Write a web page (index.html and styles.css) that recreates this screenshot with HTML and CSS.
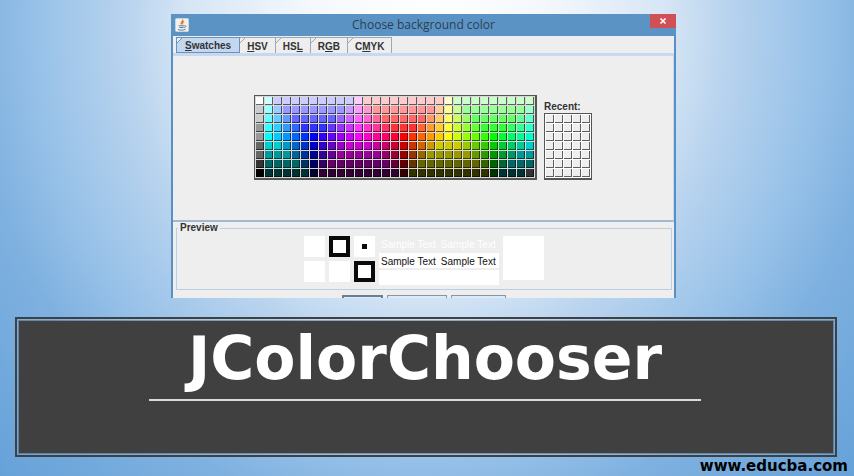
FILE: index.html
```html
<!DOCTYPE html>
<html lang="en">

<head>
  <meta charset="UTF-8">
  <meta name="viewport" content="width=device-width, initial-scale=1.0">
  <title>JColorChooser</title>
  <link rel="stylesheet" href="styles.css">
</head>

<body>
  <main class="slide">
    <section class="dialog">
      <header class="titlebar">
        <svg class="titlebar__icon" viewBox="0 0 14 14">
          <rect x="0.5" y="0.5" width="13" height="13" rx="1" fill="#f3f1ee" stroke="#c9d3dc" />
          <path d="M7.6 1.500c1 1.700-2.600 2.400-1.200 5M9 3.400c-1.600.8-2 1.600-1 3" fill="none" stroke="#e0813a" stroke-width="1.300" />
          <path d="M3.600 7.800h5.600M4.400 9.500h4.200M9.500 7.600c2-.4 1.800 1.600-.3 2M3 11.500c2 .9 5.600.9 7.600-.3" fill="none" stroke="#5b7d9c" />
        </svg>
        <h2 class="titlebar__text">Choose background color</h2>
        <button class="titlebar__close" type="button" aria-label="Close">
          <svg viewBox="0 0 8 8" width="8" height="8">
            <path d="M1.500 1.500l5 5M6.500 1.500l-5 5" stroke="#fff" stroke-width="1.600" />
          </svg>
        </button>
      </header>

      <nav class="tabs" role="tablist">
        <button class="tab tab--active" type="button" role="tab" aria-selected="true"><u>S</u>watches</button>
        <button class="tab" type="button" role="tab"><u>H</u>SV</button>
        <button class="tab" type="button" role="tab">HS<u>L</u></button>
        <button class="tab" type="button" role="tab">R<u>G</u>B</button>
        <button class="tab" type="button" role="tab">C<u>M</u>YK</button>
      </nav>

      <div class="panel">
        <div class="swatches" id="swatches"></div>
        <div class="recent">
          <span class="recent__label">Recent:</span>
          <div class="swatches swatches--recent" id="recent"></div>
        </div>
      </div>

      <fieldset class="preview">
        <legend class="preview__legend">Preview</legend>
        <div class="preview__body">
          <div class="squares">
            <span class="square"></span>
            <span class="square square--frame"></span>
            <span class="square square--dot"></span>
            <span class="square"></span>
            <span class="square"></span>
            <span class="square square--frame"></span>
          </div>
          <div class="samples">
            <div class="sample sample--light"><span>Sample Text</span><span>Sample Text</span></div>
            <div class="sample sample--filled"><span>Sample Text</span><span>Sample Text</span></div>
            <div class="sample sample--filled"></div>
          </div>
          <div class="preview__color"></div>
        </div>
      </fieldset>

      <div class="actions">
        <button class="action action--ok" type="button" aria-label="OK"></button>
        <button class="action action--cancel" type="button" aria-label="Cancel"></button>
        <button class="action action--reset" type="button" aria-label="Reset"></button>
      </div>
    </section>

    <section class="banner">
      <div class="banner__inner">
        <h1 class="banner__title">JColorChooser</h1>
        <hr class="banner__rule">
      </div>
    </section>

    <footer class="site">www.educba.com</footer>
  </main>

  <script src="script.js"></script>
</body>

</html>
```

FILE: styles.css
```css
* {
  box-sizing: border-box;
}

body {
  margin: 0;
  font-family: "Liberation Sans", Arial, sans-serif;
  font-size: 10px;
  line-height: 12px;
  color: #333;
}

button {
  margin: 0;
  padding: 0;
  border: 0;
  font: inherit;
  color: inherit;
}

.slide {
  min-height: 100vh;
  background: radial-gradient(ellipse 56% 110% at 50% 6%, #fff 0%, #f4f8fd 25%, #d6e6f5 50%, #b8d3ee 63%, #9ac3e9 80%, #7fb1e0 95%, #5b9bd5 135%);
  padding-top: 14px;
}

/* Dialog window */

.dialog {
  margin: 0 178px 19px 171px;
  border: solid #5a8fc4;
  border-width: 0 2px;
  background-color: #eee;
}

.titlebar {
  display: flex;
  align-items: center;
  height: 22px;
  margin: 0 -2px;
  padding-left: 4px;
  background-color: #5b93c5;
}

.titlebar__icon {
  width: 14px;
  height: 14px;
}

.titlebar__text {
  flex: 1;
  margin: 0;
  padding-left: 8px;
  font-family: "Open Sans", "Noto Sans", sans-serif;
  font-size: 12px;
  font-weight: 400;
  line-height: 20px;
  text-align: center;
  color: #2c3f52;
}

.titlebar__close {
  display: flex;
  align-items: center;
  justify-content: center;
  align-self: flex-start;
  width: 26px;
  height: 14px;
  background-color: #cf5156;
}

.tabs {
  display: flex;
  align-items: flex-end;
  height: 17px;
  padding-left: 3px;
}

.tab {
  height: 16px;
  padding: 2px 7px 0;
  border: 1px solid #9aa9b8;
  border-width: 1px 1px 0 0;
  background: linear-gradient(135deg, transparent 3px, #9aa9b8 3px, #9aa9b8 4px, #eee 4px);
  font-weight: 700;
}

.tab--active {
  padding: 2px 8px 0;
  border: 1px solid #6f8fc0;
  background: linear-gradient(135deg, #eee 3px, #6f8fc0 3px, #6f8fc0 4px, #c3d7ef 4px);
}

.panel {
  display: flex;
  align-items: flex-end;
  justify-content: center;
  gap: 7px;
  padding: 39px 0 40px;
  border: solid #c6d9ee;
  border-width: 3px 1px 2px 0;
  border-bottom-color: #a3b8cc;
}

.swatches {
  display: grid;
  grid-template-columns: repeat(31, 8px);
  grid-auto-rows: 8px;
  gap: 1px;
  padding: 1px;
  border: 1px solid #555;
  border-width: 1px 2px 2px 1px;
  background-color: #d8d8d8;
}

.swatches--recent {
  grid-template-columns: repeat(5, 8px);
  border-right-width: 1px;
  background-color: #fff;
}

.swatch {
  border: solid rgba(0, 0, 0, 0.6);
  border-width: 0 1px 1px 0;
  background-color: #eee;
}

.recent {
  display: flex;
  flex-direction: column;
}

.recent__label,
.preview__legend {
  font-weight: 700;
}

/* Preview area */

.preview {
  margin: 0 2px 5px 3px;
  padding: 2px 0 4px;
  border: 1px solid #bccfe2;
}

.preview__legend {
  margin-left: 1px;
  padding: 0 2px;
}

.preview__body {
  display: flex;
  justify-content: center;
  gap: 4px;
}

.squares {
  display: grid;
  grid-template-columns: repeat(3, 21px);
  grid-auto-rows: 21px;
  gap: 4px;
}

.square {
  background-color: #fff;
}

.square--frame {
  border: 4px solid #0a0a0a;
}

.square--dot {
  border: 8px solid #fff;
  background-color: #0a0a0a;
}

.samples {
  display: flex;
  flex-direction: column;
  gap: 2px;
}

.sample {
  display: flex;
  gap: 5px;
  width: 120px;
  height: 15px;
  padding: 0 2px;
  line-height: 18px;
  white-space: nowrap;
  color: #111;
}

.sample--light {
  color: #fff;
}

.sample--filled {
  background-color: #fff;
}

.preview__color {
  width: 41px;
  height: 44px;
  background-color: #fff;
}

.actions {
  display: flex;
  justify-content: center;
  gap: 4px;
  height: 3px;
  overflow: hidden;
}

.action {
  height: 24px;
  border: 1px solid #8297aa;
  background: linear-gradient(#dce9f5, #fff);
}

.action--ok {
  width: 41px;
  border: 2px solid #6b7f93;
}

.action--cancel {
  width: 60px;
}

.action--reset {
  width: 55px;
}

/* Title banner */

.banner {
  margin: 0 17px 0 15px;
  padding: 1px;
  border: 2px solid #404040;
}

.banner__inner {
  padding: 2px 132px 52px 130px;
  border: 1px solid rgba(64, 64, 64, 0.35);
  background-color: #404040;
  background-clip: padding-box;
}

.banner__title {
  margin: 0;
  font-family: Verdana, "DejaVu Sans", sans-serif;
  font-size: 60px;
  font-weight: 700;
  line-height: 70px;
  text-align: center;
  white-space: nowrap;
  color: #fff;
}

.banner__rule {
  height: 2px;
  margin: 6px 0 0;
  border: 0;
  background-color: #dcd8dc;
}

.site {
  padding-right: 6px;
  font-family: Verdana, "DejaVu Sans", sans-serif;
  font-size: 15px;
  font-weight: 700;
  line-height: 19px;
  text-align: right;
  color: #000;
}
```

FILE: script.js
```js
// Each row is a list of "hex" or "hex*count" runs, 31 cells per row.
const rows = [
  "fff cff ccf*9 fcf fcc*9 ffc cfc*9",
  "ccc 9ff 9cf 99f*7 c9f f9f f9c f99*7 fc9 ff9 cf9 9f9*7 9fc",
  "ccc 6ff 6cf 69f 66f*5 96f c6f f6f f6c f69 f66*5 f96 fc6 ff6 cf6 9f6 6f6*5 6f9 6fc",
  "999 3ff 3cf 39f 36f 33f*3 63f 93f c3f f3f f3c f39 f36 f33*3 f63 f93 fc3 ff3 cf3 9f3 6f3 3f3*3 3f6 3f9 3fc",
  "999 0ff 0cf 09f 06f 03f 00f 30f 60f 90f c0f f0f f0c f09 f06 f03 f00 f30 f60 f90 fc0 ff0 cf0 9f0 6f0 3f0 0f0 0f3 0f6 0f9 0fc",
  "666 0cc*2 09c 06c 03c 00c 30c 60c 90c c0c*3 c09 c06 c03 c00 c30 c60 c90 cc0*3 9c0 6c0 3c0 0c0 0c3 0c6 0c9 0cc",
  "666 099*3 069 039 009 309 609 909*5 906 903 900 930 960 990*5 690 390 090 093 096 099*2",
  "333 066*4 036 006 306 606*7 603 600 630 660*7 360 060 063 066*3",
  "000 033*5 003 303*9 300 330*9 030 033*3 333"
];

function addSwatch(parent, color) {
  const swatch = document.createElement("button");
  swatch.type = "button";
  swatch.className = "swatch";
  swatch.setAttribute("aria-label", color || "empty");
  if (color) {
    swatch.style.backgroundColor = color;
  }
  parent.appendChild(swatch);
}

const swatches = document.querySelector("#swatches");
rows.forEach((row) => {
  row.split(" ").forEach((run) => {
    const [hex, count = 1] = run.split("*");
    for (let i = 0; i < count; i++) {
      addSwatch(swatches, `#${hex}`);
    }
  });
});

const recent = document.querySelector("#recent");
for (let i = 0; i < 35; i++) {
  addSwatch(recent);
}
```
